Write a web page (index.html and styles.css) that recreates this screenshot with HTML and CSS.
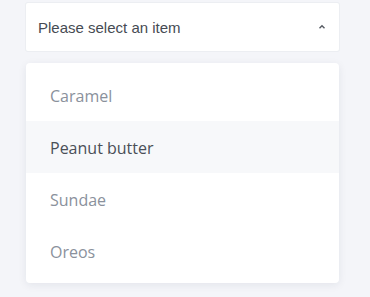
FILE: index.html
```html
<!DOCTYPE html>
<html>
<head>
<meta charset="utf-8">
<link rel="stylesheet" href="styles.css">
</head>
<body>
<div class="wrap">
  <div class="select">
    <span class="placeholder">Please select an item</span>
    <svg class="caret" width="8" height="6" viewBox="0 0 8 6"><path d="M1.5 4.2 L4 1.7 L6.5 4.2" fill="none" stroke="#555a62" stroke-width="1.4"/></svg>
  </div>
  <ul class="menu">
    <li class="item">Caramel</li>
    <li class="item active">Peanut butter</li>
    <li class="item">Sundae</li>
    <li class="item">Oreos</li>
  </ul>
</div>
</body>
</html>
```
FILE: styles.css
```css
html, body { margin: 0; padding: 0; }
body { background: #f4f5f9; width: 370px; height: 297px; overflow: hidden; }
.wrap { padding: 3px 31px 0 26px; display: flex; flex-direction: column; gap: 12px; }
.select {
  height: 48px; background: #fff; box-sizing: border-box;
  display: flex; align-items: center; justify-content: space-between;
  padding: 0 12px 0 12px;
  box-shadow: 0 0 0 1px #eceef2;
  border-radius: 2px;
}
.placeholder { font-family: "Liberation Sans", Arial, sans-serif; font-size: 15px; color: #464b53; }
.caret { margin-right: 1px; }
.menu {
  list-style: none; margin: 0; padding: 6px 0;
  background: #fff; border-radius: 4px;
  box-shadow: 0 2px 8px rgba(30, 40, 70, 0.08);
}
.item {
  height: 52px; box-sizing: border-box; display: flex; align-items: center; padding: 2px 0 0 24px;
  font-family: "Open Sans", "Noto Sans", sans-serif; font-size: 16px; color: #8a919c;
}
.item.active { background: #f7f8fa; color: #4a4f57; }
```
